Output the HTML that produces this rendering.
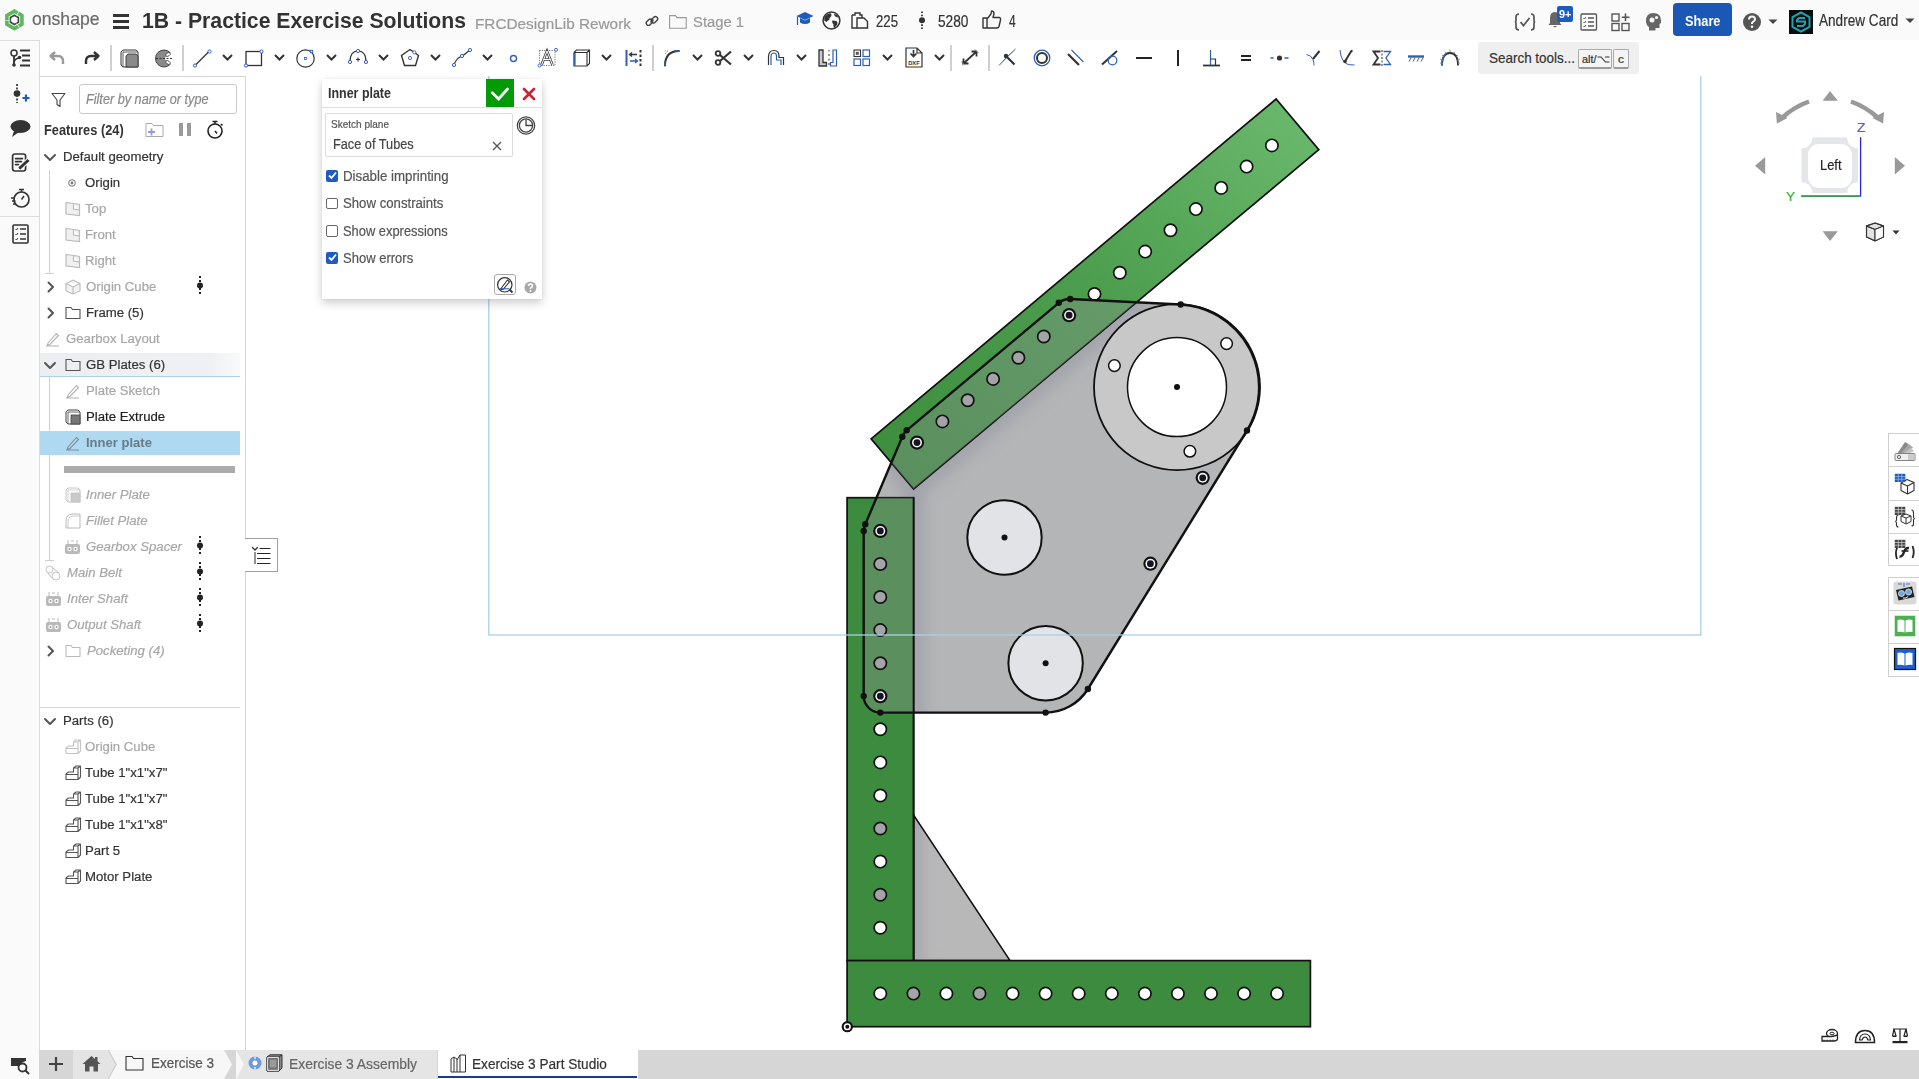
<!DOCTYPE html>
<html><head><meta charset="utf-8">
<style>
*{box-sizing:border-box;margin:0;padding:0}
html,body{width:1919px;height:1079px;overflow:hidden;background:#fff;font-family:"Liberation Sans",sans-serif;color:#333}
.abs{position:absolute}
#topbar{position:absolute;left:0;top:0;width:1919px;height:40px;background:#fafafa}
#strip{position:absolute;left:0;top:40px;width:40px;height:1039px;background:#fafafa;border-right:1px solid #dcdcdc;border-top:1px solid #dcdcdc}
#toolbar{position:absolute;left:40px;top:40px;width:1879px;height:36px;background:#fff}
#fpanel{position:absolute;left:39px;top:76px;width:207px;height:974px;background:#fff;border-top:1px solid #d6d6d6;border-right:1px solid #d6d6d6;border-left:1px solid #dcdcdc}
svg{overflow:visible}
.tx{-webkit-text-stroke:0.2px currentColor}
</style></head><body>
<svg width="1919" height="1079" viewBox="0 0 1919 1079" style="position:absolute;left:0;top:0">
<defs>
<linearGradient id="gg" x1="0" y1="0" x2="1" y2="0"><stop offset="0" stop-color="#a9aaae"/><stop offset="0.5" stop-color="#b3b4b6"/><stop offset="1" stop-color="#b9babb"/></linearGradient>
<linearGradient id="gt" x1="0" y1="1" x2="1" y2="0"><stop offset="0" stop-color="#3b8c3d"/><stop offset="0.5" stop-color="#4c9d4e"/><stop offset="1" stop-color="#6cba6e"/></linearGradient>
<filter id="blur" x="-20%" y="-20%" width="140%" height="140%"><feGaussianBlur stdDeviation="7"/></filter><clipPath id="gc"><path d="M913.6,815 L913.6,960.6 L1010,960.6 Z"/></clipPath><clipPath id="pc"><path d="M863.7,531 L863.7,696.1 A16.6,16.6 0 0 0 880.3,712.6 L1045.6,712.6 A50,50 0 0 0 1087.9,689 L1247,430.5 A83,83 0 0 0 1180.7,304.5 L1070.2,299 A16.6,16.6 0 0 0 1058.8,302.8 L906.7,430.3 A16.2,16.2 0 0 0 902.3,436.7 L865.3,524.3 A16.4,16.4 0 0 0 863.7,531 Z"/></clipPath>
</defs>
<path d="M913.6,815 L913.6,960.6 L1010,960.6 Z" fill="#b8b8b9"/>
<g clip-path="url(#gc)" filter="url(#blur)"><path d="M913.6,800 L913.6,975 L1020,975" fill="none" stroke="#9597a3" stroke-width="18" opacity="0.5"/></g>
<path d="M913.6,815 L913.6,960.6 L1010,960.6 Z" fill="none" stroke="#111" stroke-width="1.5"/>
<path d="M863.7,531 L863.7,696.1 A16.6,16.6 0 0 0 880.3,712.6 L1045.6,712.6 A50,50 0 0 0 1087.9,689 L1247,430.5 A83,83 0 0 0 1180.7,304.5 L1070.2,299 A16.6,16.6 0 0 0 1058.8,302.8 L906.7,430.3 A16.2,16.2 0 0 0 902.3,436.7 L865.3,524.3 A16.4,16.4 0 0 0 863.7,531 Z" fill="#b4b5b7"/>
<g clip-path="url(#pc)" filter="url(#blur)"><path d="M913.6,497 L913.6,720" stroke="#9597a3" stroke-width="22" opacity="0.55"/><path d="M871.1,438.9 L913.6,489 L1318.8,149.7" fill="none" stroke="#9597a3" stroke-width="22" opacity="0.55"/></g>
<circle cx="1177" cy="387.1" r="83" fill="#c8c8c9"/>
<rect x="847.1" y="497.7" width="66.5" height="463" fill="#3d8b3e" stroke="#111" stroke-width="1.7"/>
<rect x="847.1" y="960.6" width="463.3" height="66.1" fill="#3d8b3e" stroke="#111" stroke-width="1.7"/>
<path d="M871.1,438.9 L1276.1,99 L1318.8,149.7 L913.6,489 Z" fill="url(#gt)" stroke="#111" stroke-width="1.7"/>
<g clip-path="url(#pc)"><rect x="847.1" y="497.7" width="66.5" height="463" fill="#8f9696" opacity="0.36"/><path d="M871.1,438.9 L1276.1,99 L1318.8,149.7 L913.6,489 Z" fill="#8f9696" opacity="0.36"/></g>
<line x1="913.6" y1="497.7" x2="913.6" y2="960.6" stroke="#111" stroke-width="1.7"/>
<circle cx="880.3" cy="993.6" r="6.15" fill="#fff" stroke="#111" stroke-width="1.7"/>
<circle cx="913.4" cy="993.6" r="6.15" fill="#a3a3a8" stroke="#111" stroke-width="1.7"/>
<circle cx="946.4" cy="993.6" r="6.15" fill="#fff" stroke="#111" stroke-width="1.7"/>
<circle cx="979.5" cy="993.6" r="6.15" fill="#a3a3a8" stroke="#111" stroke-width="1.7"/>
<circle cx="1012.6" cy="993.6" r="6.15" fill="#fff" stroke="#111" stroke-width="1.7"/>
<circle cx="1045.6" cy="993.6" r="6.15" fill="#fff" stroke="#111" stroke-width="1.7"/>
<circle cx="1078.7" cy="993.6" r="6.15" fill="#fff" stroke="#111" stroke-width="1.7"/>
<circle cx="1111.8" cy="993.6" r="6.15" fill="#fff" stroke="#111" stroke-width="1.7"/>
<circle cx="1144.9" cy="993.6" r="6.15" fill="#fff" stroke="#111" stroke-width="1.7"/>
<circle cx="1177.9" cy="993.6" r="6.15" fill="#fff" stroke="#111" stroke-width="1.7"/>
<circle cx="1211.0" cy="993.6" r="6.15" fill="#fff" stroke="#111" stroke-width="1.7"/>
<circle cx="1244.1" cy="993.6" r="6.15" fill="#fff" stroke="#111" stroke-width="1.7"/>
<circle cx="1277.1" cy="993.6" r="6.15" fill="#fff" stroke="#111" stroke-width="1.7"/>
<circle cx="880.3" cy="530.9" r="7.1" fill="#111"/><circle cx="880.3" cy="530.9" r="4.95" fill="#f4f4f8"/><circle cx="880.3" cy="530.9" r="3.4" fill="#15141f"/>
<circle cx="880.3" cy="564.0" r="6.15" fill="#a3a3a8" stroke="#111" stroke-width="1.7"/>
<circle cx="880.3" cy="597.0" r="6.15" fill="#a3a3a8" stroke="#111" stroke-width="1.7"/>
<circle cx="880.3" cy="630.1" r="6.15" fill="#a3a3a8" stroke="#111" stroke-width="1.7"/>
<circle cx="880.3" cy="663.2" r="6.15" fill="#a3a3a8" stroke="#111" stroke-width="1.7"/>
<circle cx="880.3" cy="696.2" r="7.1" fill="#111"/><circle cx="880.3" cy="696.2" r="4.95" fill="#f4f4f8"/><circle cx="880.3" cy="696.2" r="3.4" fill="#15141f"/>
<circle cx="880.3" cy="729.3" r="6.15" fill="#fff" stroke="#111" stroke-width="1.7"/>
<circle cx="880.3" cy="762.4" r="6.15" fill="#fff" stroke="#111" stroke-width="1.7"/>
<circle cx="880.3" cy="795.5" r="6.15" fill="#fff" stroke="#111" stroke-width="1.7"/>
<circle cx="880.3" cy="828.5" r="6.15" fill="#a3a3a8" stroke="#111" stroke-width="1.7"/>
<circle cx="880.3" cy="861.6" r="6.15" fill="#fff" stroke="#111" stroke-width="1.7"/>
<circle cx="880.3" cy="894.7" r="6.15" fill="#a3a3a8" stroke="#111" stroke-width="1.7"/>
<circle cx="880.3" cy="927.7" r="6.15" fill="#fff" stroke="#111" stroke-width="1.7"/>
<circle cx="1271.9" cy="145.4" r="6.15" fill="#fff" stroke="#111" stroke-width="1.7"/>
<circle cx="1246.6" cy="166.6" r="6.15" fill="#fff" stroke="#111" stroke-width="1.7"/>
<circle cx="1221.2" cy="187.9" r="6.15" fill="#fff" stroke="#111" stroke-width="1.7"/>
<circle cx="1195.9" cy="209.1" r="6.15" fill="#fff" stroke="#111" stroke-width="1.7"/>
<circle cx="1170.5" cy="230.3" r="6.15" fill="#fff" stroke="#111" stroke-width="1.7"/>
<circle cx="1145.2" cy="251.6" r="6.15" fill="#fff" stroke="#111" stroke-width="1.7"/>
<circle cx="1119.8" cy="272.8" r="6.15" fill="#fff" stroke="#111" stroke-width="1.7"/>
<circle cx="1094.5" cy="294.0" r="6.15" fill="#fff" stroke="#111" stroke-width="1.7"/>
<circle cx="1069.1" cy="315.2" r="7.1" fill="#111"/><circle cx="1069.1" cy="315.2" r="4.95" fill="#f4f4f8"/><circle cx="1069.1" cy="315.2" r="3.4" fill="#15141f"/>
<circle cx="1043.8" cy="336.5" r="6.15" fill="#a3a3a8" stroke="#111" stroke-width="1.7"/>
<circle cx="1018.4" cy="357.7" r="6.15" fill="#a3a3a8" stroke="#111" stroke-width="1.7"/>
<circle cx="993.1" cy="378.9" r="6.15" fill="#a3a3a8" stroke="#111" stroke-width="1.7"/>
<circle cx="967.7" cy="400.2" r="6.15" fill="#a3a3a8" stroke="#111" stroke-width="1.7"/>
<circle cx="942.4" cy="421.4" r="6.15" fill="#a3a3a8" stroke="#111" stroke-width="1.7"/>
<circle cx="917.0" cy="442.6" r="7.1" fill="#111"/><circle cx="917.0" cy="442.6" r="4.95" fill="#f4f4f8"/><circle cx="917.0" cy="442.6" r="3.4" fill="#15141f"/>
<circle cx="1177" cy="387.1" r="49.5" fill="#fff" stroke="#111" stroke-width="1.5"/>
<circle cx="1177" cy="387.1" r="83" fill="none" stroke="#111" stroke-width="1.8"/>
<circle cx="1226.6" cy="343.6" r="5.8" fill="#fff" stroke="#111" stroke-width="1.5"/>
<circle cx="1114.4" cy="365.6" r="5.8" fill="#fff" stroke="#111" stroke-width="1.5"/>
<circle cx="1189.9" cy="451.3" r="5.8" fill="#fff" stroke="#111" stroke-width="1.5"/>
<circle cx="1004.5" cy="537.5" r="37.2" fill="#e1e3e6" stroke="#111" stroke-width="2"/>
<circle cx="1004.5" cy="537.5" r="3" fill="#111"/>
<circle cx="1045.6" cy="663.2" r="37.2" fill="#e1e3e6" stroke="#111" stroke-width="2"/>
<circle cx="1045.6" cy="663.2" r="3" fill="#111"/>
<circle cx="1177" cy="387.1" r="3" fill="#111"/>
<path d="M863.7,531 L863.7,696.1 A16.6,16.6 0 0 0 880.3,712.6 L1045.6,712.6 A50,50 0 0 0 1087.9,689 L1247,430.5 A83,83 0 0 0 1180.7,304.5 L1070.2,299 A16.6,16.6 0 0 0 1058.8,302.8 L906.7,430.3 A16.2,16.2 0 0 0 902.3,436.7 L865.3,524.3 A16.4,16.4 0 0 0 863.7,531 Z" fill="none" stroke="#111" stroke-width="2.4" stroke-linejoin="round"/>
<circle cx="863.7" cy="531" r="3.2" fill="#111"/>
<circle cx="865.3" cy="524.3" r="3.2" fill="#111"/>
<circle cx="863.7" cy="696.1" r="3.2" fill="#111"/>
<circle cx="880.3" cy="712.6" r="3.2" fill="#111"/>
<circle cx="1045.6" cy="712.6" r="3.2" fill="#111"/>
<circle cx="1087.9" cy="689" r="3.2" fill="#111"/>
<circle cx="1247" cy="430.5" r="3.2" fill="#111"/>
<circle cx="1180.7" cy="304.5" r="3.2" fill="#111"/>
<circle cx="1070.2" cy="299" r="3.2" fill="#111"/>
<circle cx="1058.8" cy="302.8" r="3.2" fill="#111"/>
<circle cx="906.7" cy="430.3" r="3.2" fill="#111"/>
<circle cx="902.3" cy="436.7" r="3.2" fill="#111"/>
<circle cx="1202.7" cy="477.8" r="7.1" fill="#111"/><circle cx="1202.7" cy="477.8" r="4.95" fill="#f4f4f8"/><circle cx="1202.7" cy="477.8" r="3.4" fill="#15141f"/>
<circle cx="1150.4" cy="563.7" r="7.1" fill="#111"/><circle cx="1150.4" cy="563.7" r="4.95" fill="#f4f4f8"/><circle cx="1150.4" cy="563.7" r="3.4" fill="#15141f"/>
<rect x="488.8" y="60" width="1212" height="575" fill="none" stroke="#a9cfe6" stroke-width="1.3"/>
<circle cx="847.3" cy="1026.7" r="4.6" fill="#fff" stroke="#111" stroke-width="2.1"/><circle cx="847.3" cy="1026.7" r="2" fill="#111"/>
</svg>
<div id="topbar"></div>
<div id="toolbar"></div>
<div id="strip"></div>
<div id="fpanel"></div>
<svg class="abs" style="left:2px;top:6px" width="26" height="28" viewBox="0 0 26 28"><path d="M4.87,13.90 L4.87,9.55 L12.40,5.20 L15.56,7.03" fill="none" stroke="#5cb85c" stroke-width="3.6" stroke-linejoin="miter"/><path d="M16.17,7.38 L19.93,9.55 L19.93,18.25 L16.77,20.08" fill="none" stroke="#5cb85c" stroke-width="3.6" stroke-linejoin="miter"/><path d="M16.17,20.43 L12.40,22.60 L4.87,18.25 L4.87,14.60" fill="none" stroke="#5cb85c" stroke-width="3.6" stroke-linejoin="miter"/><path d="M8.42,13.35 L8.42,11.60 L12.40,9.30 L13.60,9.99" fill="none" stroke="#444" stroke-width="1.7" stroke-linecap="round"/><path d="M14.87,10.73 L16.38,11.60 L16.38,16.20 L15.19,16.89" fill="none" stroke="#444" stroke-width="1.7" stroke-linecap="round"/><path d="M13.91,17.63 L12.40,18.50 L8.42,16.20 L8.42,14.82" fill="none" stroke="#444" stroke-width="1.7" stroke-linecap="round"/></svg>
<div class="abs tx" style="left:31.50px;top:9.64px;font-size:18.50px;line-height:18.50px;font-weight:normal;font-style:normal;color:#6a6a6a;white-space:pre;transform:scaleX(0.9509);transform-origin:0 0;">onshape</div>
<div class="abs" style="left:113px;top:14px;width:16px;height:2.6px;background:#333"></div><div class="abs" style="left:113px;top:20px;width:16px;height:2.6px;background:#333"></div><div class="abs" style="left:113px;top:26px;width:16px;height:2.6px;background:#333"></div>
<div class="abs" style="left:141.70px;top:9.41px;font-size:22.67px;line-height:22.67px;font-weight:bold;font-style:normal;color:#333;white-space:pre;transform:scaleX(0.9358);transform-origin:0 0;">1B - Practice Exercise Solutions</div>
<div class="abs tx" style="left:475.30px;top:15.80px;font-size:15.12px;line-height:15.12px;font-weight:normal;font-style:normal;color:#999;white-space:pre;transform:scaleX(1.0147);transform-origin:0 0;">FRCDesignLib Rework</div>
<svg class="abs" style="left:645px;top:14px" width="14" height="14" viewBox="0 0 14 14"><path d="M5.5,8.5 L8.5,5.5" stroke="#444" stroke-width="1.5"/><rect x="0.9" y="6" width="7" height="4.5" rx="2.2" transform="rotate(-45 4.4 8.25)" fill="none" stroke="#444" stroke-width="1.4"/><rect x="6" y="3.5" width="7" height="4.5" rx="2.2" transform="rotate(-45 9.5 5.75)" fill="none" stroke="#444" stroke-width="1.4"/></svg>
<svg class="abs" style="left:669px;top:15px" width="18" height="14" viewBox="0 0 18 14"><path d="M0.6,0.6 L6.5,0.6 L8,2.6 L17.2,2.6 L17.2,13.2 L0.6,13.2 Z" fill="none" stroke="#999" stroke-width="1.1"/></svg>
<div class="abs tx" style="left:692.90px;top:13.88px;font-size:15.26px;line-height:15.26px;font-weight:normal;font-style:normal;color:#999;white-space:pre;transform:scaleX(0.9713);transform-origin:0 0;">Stage 1</div>
<svg class="abs" style="left:796px;top:11px" width="18" height="16" viewBox="0 0 18 16"><path d="M9,1 L17.5,5 L9,9 L0.5,5 Z" fill="#1d5bbf"/><path d="M4,7 L4,11.5 Q9,14.5 14,11.5 L14,7 L9,9.5 Z" fill="#1d5bbf"/><path d="M1.5,5.5 L1.5,14" stroke="#1d5bbf" stroke-width="1.2"/></svg>
<svg class="abs" style="left:822px;top:11px" width="19" height="19" viewBox="0 0 19 19"><circle cx="9.5" cy="9.5" r="8.4" fill="none" stroke="#333" stroke-width="1.5"/><path d="M2.5,6 Q5,2.5 9,2.2 L9.5,4.5 Q8.5,6.5 7.5,7 Q8,9 6,9.5 L4.5,11 L2.2,9.5 Z M10,9.5 L14.5,10 Q16.2,11.5 15,14 L12,17.2 Q11.2,15 11.5,13.5 Q10,12 10,9.5 Z M12,2.5 Q15.5,3.5 16.5,6.5 L14,6 L12.5,4.5 Z" fill="#333"/></svg>
<svg class="abs" style="left:851px;top:12px" width="18" height="17" viewBox="0 0 18 17"><path d="M1,3 L4,3 L4,1 L9,1 L9,3 L11,3 L11,6" fill="none" stroke="#333" stroke-width="1.4"/><path d="M1,3 L1,16 L6,16" fill="none" stroke="#333" stroke-width="1.4"/><path d="M6,6 L13,6 L16.5,9.5 L16.5,16 L6,16 Z" fill="none" stroke="#333" stroke-width="1.4"/></svg>
<div class="abs tx" style="left:875.70px;top:12.82px;font-size:16.28px;line-height:16.28px;font-weight:normal;font-style:normal;color:#333;white-space:pre;transform:scaleX(0.8099);transform-origin:0 0;">225</div>
<svg class="abs" style="left:918px;top:11px" width="8" height="18" viewBox="0 0 8 18"><path d="M4,0.5 L4,18" stroke="#333" stroke-width="1.8" stroke-dasharray="1.6,1.6"/><circle cx="4" cy="9.3" r="3" fill="#333"/></svg>
<div class="abs tx" style="left:937.60px;top:12.82px;font-size:16.28px;line-height:16.28px;font-weight:normal;font-style:normal;color:#333;white-space:pre;transform:scaleX(0.8422);transform-origin:0 0;">5280</div>
<svg class="abs" style="left:982px;top:10px" width="20" height="19" viewBox="0 0 20 19"><path d="M1,8 L5,8 L5,18 L1,18 Z M5,9 L9,4 L9.5,1 Q12,1 12,4 L11,7.5 L17.5,7.5 Q19,8 18.5,10 L17,16.5 Q16.5,18 15,18 L5,18" fill="none" stroke="#333" stroke-width="1.4" stroke-linejoin="round"/></svg>
<div class="abs tx" style="left:1009.00px;top:12.82px;font-size:16.28px;line-height:16.28px;font-weight:normal;font-style:normal;color:#333;white-space:pre;transform:scaleX(0.7399);transform-origin:0 0;">4</div>
<svg class="abs" style="left:1514px;top:13px" width="22" height="18" viewBox="0 0 22 18"><path d="M5,1 Q2,1 2,4 L2,7 Q2,9 0.8,9 Q2,9 2,11 L2,14 Q2,17 5,17 M17,1 Q20,1 20,4 L20,7 Q20,9 21.2,9 Q20,9 20,11 L20,14 Q20,17 17,17" fill="none" stroke="#555" stroke-width="1.7"/><path d="M6.5,9 L9.5,12.5 L15.5,5" fill="none" stroke="#555" stroke-width="1.8"/></svg>
<svg class="abs" style="left:1548px;top:10px" width="14" height="18" viewBox="0 0 14 18"><path d="M2,13 L2,8 Q2,2 7,2 Q12,2 12,8 L12,13 L13.5,15 L0.5,15 Z M5,16 Q7,18.5 9,16" fill="#666"/></svg>
<div class="abs" style="left:1557px;top:6px;width:16px;height:15.5px;background:#1d5bbf;border-radius:2px"></div>
<div class="abs" style="left:1558.50px;top:8.77px;font-size:10.90px;line-height:10.90px;font-weight:bold;font-style:normal;color:#fff;white-space:pre;transform:scaleX(1.0057);transform-origin:0 0;">9+</div>
<svg class="abs" style="left:1580px;top:13px" width="18" height="18" viewBox="0 0 18 18"><rect x="1" y="1" width="15.5" height="16" rx="1" fill="none" stroke="#555" stroke-width="1.3"/><path d="M3.5,5 L4.5,6 L6,4 M3.5,9 L4.5,10 L6,8 M3.5,13 L4.5,14 L6,12" fill="none" stroke="#555" stroke-width="1"/><path d="M8,5 L14,5 M8,9 L14,9 M8,13 L14,13" stroke="#555" stroke-width="1.3"/></svg>
<svg class="abs" style="left:1611px;top:13px" width="20" height="18" viewBox="0 0 20 18"><rect x="1" y="1" width="7" height="7" fill="none" stroke="#555" stroke-width="1.4"/><rect x="1" y="10.5" width="7" height="7" fill="none" stroke="#555" stroke-width="1.4"/><rect x="11" y="10.5" width="7" height="7" fill="none" stroke="#555" stroke-width="1.4"/><path d="M14.5,0.5 L14.5,8 M10.8,4.3 L18.5,4.3" stroke="#555" stroke-width="1.6"/></svg>
<svg class="abs" style="left:1644px;top:12px" width="18" height="19" viewBox="0 0 18 19"><path d="M2,9 Q2,1 9.5,1 Q17,1 17,8.5 L17,11 L15.5,12 L15.5,16 L11.5,16 L11.5,18.5 L5,18.5 L5,15 Q2,13 2,9 Z" fill="#666"/><circle cx="8" cy="8" r="2.5" fill="#f6f6f6"/><circle cx="12.5" cy="5.5" r="1.6" fill="#f6f6f6"/></svg>
<div class="abs" style="left:1673px;top:3px;width:59px;height:33px;background:#1b57b5;border-radius:4px"></div>
<div class="abs" style="left:1685.00px;top:12.58px;font-size:15.26px;line-height:15.26px;font-weight:bold;font-style:normal;color:#fff;white-space:pre;transform:scaleX(0.8369);transform-origin:0 0;">Share</div>
<svg class="abs" style="left:1742px;top:12px" width="20" height="20" viewBox="0 0 20 20"><circle cx="10" cy="10" r="9" fill="#555"/><path d="M7,7.5 Q7,4.5 10,4.5 Q13,4.5 13,7.3 Q13,9 10.8,10 L10,11 L10,12" fill="none" stroke="#f6f6f6" stroke-width="2"/><circle cx="10" cy="14.8" r="1.3" fill="#f6f6f6"/></svg>
<svg class="abs" style="left:1768px;top:19px" width="10" height="6" viewBox="0 0 10 6"><path d="M0.5,0.5 L9.5,0.5 L5,5 Z" fill="#444"/></svg>
<svg class="abs" style="left:1789px;top:10px" width="24" height="24" viewBox="0 0 24 24"><rect width="24" height="24" fill="#0b0b0b"/><path d="M12,2.5 L20.5,7.2 L20.5,16.8 L12,21.5 L3.5,16.8 L3.5,7.2 Z" fill="none" stroke="#1aa3b0" stroke-width="2"/><path d="M16,8 L10,8 L8,10 L8,11.5 L16,11.5 L16,14 L14,16 L8,16" fill="none" stroke="#1aa3b0" stroke-width="2"/></svg>
<div class="abs tx" style="left:1819.20px;top:12.67px;font-size:15.99px;line-height:15.99px;font-weight:normal;font-style:normal;color:#333;white-space:pre;transform:scaleX(0.8499);transform-origin:0 0;">Andrew Card</div>
<svg class="abs" style="left:1905px;top:18px" width="10" height="6" viewBox="0 0 10 6"><path d="M0.5,0.5 L9.5,0.5 L5,5 Z" fill="#444"/></svg>
<svg class="abs" style="left:49px;top:49px" width="16" height="16" viewBox="0 0 16 16"><path d="M6,3 L1.5,7 L6,11 M2,7 L9,7 Q14,7 14,12 L14,15" fill="none" stroke="#9a9a9a" stroke-width="2.4" stroke-linejoin="round"/></svg>
<svg class="abs" style="left:84px;top:49px" width="16" height="16" viewBox="0 0 16 16"><path d="M10,3 L14.5,7 L10,11 M14,7 L7,7 Q2,7 2,12 L2,15" fill="none" stroke="#333" stroke-width="2.4" stroke-linejoin="round"/></svg>
<div class="abs" style="left:110.25px;top:45px;width:1.5px;height:26px;background:#cfcfcf"></div>
<svg class="abs" style="left:120px;top:49px" width="19" height="19" viewBox="0 0 19 19"><path d="M1,3 L3,1 L16,1 L18,3 L18,18 L3,18 L1,16 Z" fill="#fff" stroke="#333" stroke-width="1"/><path d="M3,18 L3,3 L18,3" fill="none" stroke="#333" stroke-width="0.8"/><path d="M6,7 L8,5 L16,5 L18,7 L18,18 L6,18 Z" fill="#8a8a8a" stroke="#333" stroke-width="0.9"/></svg>
<svg class="abs" style="left:155px;top:49px" width="19" height="19" viewBox="0 0 19 19"><circle cx="9" cy="9.5" r="8.5" fill="#8a8a8a" stroke="#444" stroke-width="1"/><path d="M9,9.5 L18,2 L18,17 Z" fill="#fff"/><ellipse cx="13" cy="5.5" rx="2.5" ry="1.6" fill="#fff" stroke="#444" stroke-width="0.8" transform="rotate(-35 13 5.5)"/><ellipse cx="13" cy="13.5" rx="2.5" ry="1.6" fill="#fff" stroke="#444" stroke-width="0.8" transform="rotate(35 13 13.5)"/><path d="M1,9.5 L17,9.5" stroke="#222" stroke-width="0.9" stroke-dasharray="2,1.5"/></svg>
<div class="abs" style="left:182.25px;top:45px;width:1.5px;height:26px;background:#cfcfcf"></div>
<svg class="abs" style="left:193px;top:49px" width="19" height="19" viewBox="0 0 19 19"><path d="M2,16.5 L16.5,2" stroke="#333" stroke-width="1.3"/><circle cx="2" cy="16.5" r="1.6" fill="#fff" stroke="#2f5fb3" stroke-width="1"/><circle cx="16.5" cy="2.5" r="1.6" fill="#fff" stroke="#2f5fb3" stroke-width="1"/></svg>
<svg class="abs" style="left:221.5px;top:54px" width="11" height="7" viewBox="0 0 11 7"><path d="M1,1 L5.5,5.5 L10,1" fill="none" stroke="#333" stroke-width="2"/></svg>
<svg class="abs" style="left:244px;top:49px" width="20" height="19" viewBox="0 0 20 19"><rect x="2" y="2.5" width="15.5" height="14" fill="none" stroke="#333" stroke-width="1.3"/><circle cx="2" cy="16.5" r="1.6" fill="#fff" stroke="#2f5fb3" stroke-width="1"/><circle cx="17.5" cy="2.5" r="1.6" fill="#fff" stroke="#2f5fb3" stroke-width="1"/></svg>
<svg class="abs" style="left:273.5px;top:54px" width="11" height="7" viewBox="0 0 11 7"><path d="M1,1 L5.5,5.5 L10,1" fill="none" stroke="#333" stroke-width="2"/></svg>
<svg class="abs" style="left:296px;top:48px" width="20" height="20" viewBox="0 0 20 20"><circle cx="9.5" cy="10.5" r="8.7" fill="none" stroke="#333" stroke-width="1.2"/><rect x="8.5" y="9.5" width="2" height="2" fill="none" stroke="#2f5fb3" stroke-width="0.8"/><rect x="14.3" y="2.3" width="2.4" height="2.4" fill="#fff" stroke="#2f5fb3" stroke-width="0.9"/></svg>
<svg class="abs" style="left:325.5px;top:54px" width="11" height="7" viewBox="0 0 11 7"><path d="M1,1 L5.5,5.5 L10,1" fill="none" stroke="#333" stroke-width="2"/></svg>
<svg class="abs" style="left:348px;top:49px" width="20" height="16" viewBox="0 0 20 16"><path d="M2,13 Q2,2 10,2 Q18,2 18,13" fill="none" stroke="#333" stroke-width="1.2"/><circle cx="2" cy="13" r="1.6" fill="#fff" stroke="#2f5fb3" stroke-width="1"/><circle cx="18" cy="13" r="1.6" fill="#fff" stroke="#2f5fb3" stroke-width="1"/><circle cx="10" cy="2" r="1.6" fill="#fff" stroke="#2f5fb3" stroke-width="1"/><path d="M8,10.5 L12,10.5 M10,8.5 L10,12.5" stroke="#333" stroke-width="1.2"/></svg>
<svg class="abs" style="left:377.5px;top:54px" width="11" height="7" viewBox="0 0 11 7"><path d="M1,1 L5.5,5.5 L10,1" fill="none" stroke="#333" stroke-width="2"/></svg>
<svg class="abs" style="left:400px;top:48px" width="20" height="19" viewBox="0 0 20 19"><path d="M10,1.5 L18.5,7.5 L15.5,17.5 L4.5,17.5 L1.5,7.5 Z" fill="none" stroke="#333" stroke-width="1.4"/><circle cx="10" cy="10" r="1.6" fill="none" stroke="#2f5fb3" stroke-width="0.9"/><circle cx="14.3" cy="4.3" r="1.6" fill="#fff" stroke="#2f5fb3" stroke-width="0.9"/></svg>
<svg class="abs" style="left:429.5px;top:54px" width="11" height="7" viewBox="0 0 11 7"><path d="M1,1 L5.5,5.5 L10,1" fill="none" stroke="#333" stroke-width="2"/></svg>
<svg class="abs" style="left:452px;top:48px" width="20" height="20" viewBox="0 0 20 20"><path d="M2,17 Q4,11 8,9 Q11,8 13,6 L18,2" fill="none" stroke="#333" stroke-width="1.2"/><circle cx="2" cy="17" r="1.6" fill="#fff" stroke="#2f5fb3" stroke-width="1"/><circle cx="10" cy="8" r="1.6" fill="#fff" stroke="#2f5fb3" stroke-width="1"/><circle cx="18" cy="2" r="1.6" fill="#fff" stroke="#2f5fb3" stroke-width="1"/></svg>
<svg class="abs" style="left:481.5px;top:54px" width="11" height="7" viewBox="0 0 11 7"><path d="M1,1 L5.5,5.5 L10,1" fill="none" stroke="#333" stroke-width="2"/></svg>
<svg class="abs" style="left:509px;top:54px" width="9" height="9" viewBox="0 0 9 9"><circle cx="4.5" cy="4.5" r="3" fill="none" stroke="#2f5fb3" stroke-width="1.4"/></svg>
<svg class="abs" style="left:537px;top:48px" width="22" height="20" viewBox="0 0 22 20"><rect x="2.5" y="2.5" width="15.5" height="15" fill="none" stroke="#555" stroke-width="0.8" stroke-dasharray="1.2,1.2"/><path d="M4.5,17 L10,3 L15.5,17 M7,11.5 L13,11.5" fill="none" stroke="#444" stroke-width="2.6"/><path d="M4.5,17 L10,3 L15.5,17 M7,11.5 L13,11.5" fill="none" stroke="#fff" stroke-width="1"/><circle cx="2.5" cy="17.5" r="1.5" fill="#fff" stroke="#2f5fb3" stroke-width="0.9"/><circle cx="19" cy="1.8" r="1.5" fill="#fff" stroke="#2f5fb3" stroke-width="0.9"/></svg>
<svg class="abs" style="left:573px;top:49px" width="18" height="18" viewBox="0 0 18 18"><path d="M1,3.5 L3.5,1 L16.5,1 L16.5,14.5 L14,17 L1,17 Z M1,3.5 L14,3.5 L14,17 M14,3.5 L16.5,1" fill="none" stroke="#333" stroke-width="1.1"/><path d="M1.7,4 L1.7,16.5" stroke="#2f5fb3" stroke-width="1.8"/></svg>
<svg class="abs" style="left:601px;top:54px" width="11" height="7" viewBox="0 0 11 7"><path d="M1,1 L5.5,5.5 L10,1" fill="none" stroke="#333" stroke-width="2"/></svg>
<svg class="abs" style="left:625px;top:49px" width="18" height="18" viewBox="0 0 18 18"><path d="M1.5,1 L1.5,17" stroke="#2f5fb3" stroke-width="2"/><path d="M15.5,1 L15.5,17" stroke="#333" stroke-width="2" stroke-dasharray="2.5,2"/><path d="M12,5.5 L5,5.5 M7,3.5 L4.5,5.5 L7,7.5" fill="none" stroke="#333" stroke-width="1.3"/><path d="M5,12 L12,12 M10,10 L12.5,12 L10,14" fill="none" stroke="#2f5fb3" stroke-width="1.3"/></svg>
<div class="abs" style="left:652.25px;top:45px;width:1.5px;height:26px;background:#cfcfcf"></div>
<svg class="abs" style="left:663px;top:49px" width="18" height="18" viewBox="0 0 18 18"><path d="M2,17 Q2,2 16,2" fill="none" stroke="#333" stroke-width="2"/><path d="M2,12 L2,17.5 M11,2 L17,2" stroke="#2f5fb3" stroke-width="1.5"/><path d="M2,2 L5,2 L2,5" fill="none" stroke="#555" stroke-width="0.7" stroke-dasharray="1,1"/></svg>
<svg class="abs" style="left:691.5px;top:54px" width="11" height="7" viewBox="0 0 11 7"><path d="M1,1 L5.5,5.5 L10,1" fill="none" stroke="#333" stroke-width="2"/></svg>
<svg class="abs" style="left:715px;top:50px" width="17" height="16" viewBox="0 0 17 16"><circle cx="3" cy="3.5" r="2.3" fill="none" stroke="#333" stroke-width="1.8"/><circle cx="3" cy="12.5" r="2.3" fill="none" stroke="#333" stroke-width="1.8"/><path d="M5,5 L16,14.5 M5,11 L16,1.5" stroke="#333" stroke-width="2.2"/></svg>
<svg class="abs" style="left:743px;top:54px" width="11" height="7" viewBox="0 0 11 7"><path d="M1,1 L5.5,5.5 L10,1" fill="none" stroke="#333" stroke-width="2"/></svg>
<svg class="abs" style="left:767px;top:49px" width="18" height="17" viewBox="0 0 18 17"><path d="M1.5,16 L1.5,8 Q1.5,1.5 7,1.5 Q12,1.5 12,7 L12,8.5 L16.5,8.5 L16.5,16" fill="none" stroke="#333" stroke-width="1.2"/><path d="M4,16 L4,8 Q4,4 7,4 Q9.5,4 9.5,7 L9.5,11 L14,11 L14,16" fill="none" stroke="#2f5fb3" stroke-width="1.2"/></svg>
<svg class="abs" style="left:795.5px;top:54px" width="11" height="7" viewBox="0 0 11 7"><path d="M1,1 L5.5,5.5 L10,1" fill="none" stroke="#333" stroke-width="2"/></svg>
<svg class="abs" style="left:818px;top:49px" width="20" height="18" viewBox="0 0 20 18"><path d="M1,1 L5,1 L5,13.5 L8.5,13.5 L8.5,17 L1,17 Z" fill="#ccc" stroke="#333" stroke-width="1.3"/><path d="M11,1 L11,2.5 M11,5 L11,7 M11,9.5 L11,11.5 M11,14 L11,16" stroke="#333" stroke-width="1"/><path d="M18.5,1 L18.5,17 L12.5,17 L12.5,13.5 L15,13.5 L15,1 Z" fill="none" stroke="#2f5fb3" stroke-width="1.2"/></svg>
<svg class="abs" style="left:853px;top:49px" width="18" height="18" viewBox="0 0 18 18"><rect x="1" y="1" width="6.5" height="6.5" fill="none" stroke="#333" stroke-width="1.1"/><rect x="2.8" y="2.8" width="3" height="3" fill="#555"/><rect x="10" y="1" width="6.5" height="6.5" fill="none" stroke="#2f5fb3" stroke-width="1.2"/><rect x="1" y="10" width="6.5" height="6.5" fill="none" stroke="#2f5fb3" stroke-width="1.2"/><rect x="10" y="10" width="6.5" height="6.5" fill="none" stroke="#2f5fb3" stroke-width="1.2"/></svg>
<svg class="abs" style="left:881.5px;top:54px" width="11" height="7" viewBox="0 0 11 7"><path d="M1,1 L5.5,5.5 L10,1" fill="none" stroke="#333" stroke-width="2"/></svg>
<svg class="abs" style="left:905px;top:47px" width="18" height="21" viewBox="0 0 18 21"><path d="M1,1 L12,1 L17,6 L17,20 L1,20 Z M12,1 L12,6 L17,6" fill="none" stroke="#333" stroke-width="1.2"/><path d="M8.5,3 L8.5,9 M5.5,6.5 L8.5,9.5 L11.5,6.5" fill="none" stroke="#333" stroke-width="1.6"/><text x="9" y="18" font-size="5.8" font-family="Liberation Sans" font-weight="bold" text-anchor="middle" fill="#333">DXF</text></svg>
<svg class="abs" style="left:933.5px;top:54px" width="11" height="7" viewBox="0 0 11 7"><path d="M1,1 L5.5,5.5 L10,1" fill="none" stroke="#333" stroke-width="2"/></svg>
<div class="abs" style="left:950.25px;top:45px;width:1.5px;height:26px;background:#cfcfcf"></div>
<svg class="abs" style="left:961px;top:49px" width="18" height="17" viewBox="0 0 18 17"><path d="M2.5,14.5 L15.5,2.5 M2.5,14.5 L2.5,9.5 M2.5,14.5 L7.5,14.5 M15.5,2.5 L10.5,2.5 M15.5,2.5 L15.5,7.5" fill="none" stroke="#333" stroke-width="1.8"/><path d="M2,16.5 L1,12 M14,0.5 L17.5,4" stroke="#555" stroke-width="0.8"/></svg>
<div class="abs" style="left:988.25px;top:45px;width:1.5px;height:26px;background:#cfcfcf"></div>
<svg class="abs" style="left:998px;top:48px" width="19" height="19" viewBox="0 0 19 19"><path d="M1,17.5 L9.5,8.5 L17.5,1" stroke="#2f5fb3" stroke-width="1"/><path d="M7.5,7.5 L16.5,16.5" stroke="#333" stroke-width="2.2"/><circle cx="8" cy="8" r="2.2" fill="#333"/></svg>
<svg class="abs" style="left:1033px;top:49px" width="18" height="18" viewBox="0 0 18 18"><circle cx="9" cy="9" r="7.8" fill="none" stroke="#2f5fb3" stroke-width="1.3"/><circle cx="9" cy="9" r="5" fill="none" stroke="#333" stroke-width="2"/></svg>
<svg class="abs" style="left:1067px;top:49px" width="18" height="18" viewBox="0 0 18 18"><path d="M1,5 L12,16" stroke="#333" stroke-width="2.2"/><path d="M4.5,1 L16.5,13" stroke="#2f5fb3" stroke-width="1.1"/></svg>
<svg class="abs" style="left:1101px;top:49px" width="18" height="18" viewBox="0 0 18 18"><path d="M1,15.5 L16,2" stroke="#333" stroke-width="2"/><circle cx="11.5" cy="11.5" r="4.3" fill="none" stroke="#2f5fb3" stroke-width="1.2"/></svg>
<div class="abs" style="left:1135.5px;top:57px;width:16px;height:2px;background:#222"></div>
<div class="abs" style="left:1176.5px;top:50px;width:2px;height:16px;background:#222"></div>
<svg class="abs" style="left:1202px;top:49px" width="19" height="18" viewBox="0 0 19 18"><path d="M1,16.5 L18,16.5" stroke="#333" stroke-width="1.8"/><path d="M8.5,1 L8.5,16" stroke="#2f5fb3" stroke-width="1.2"/><path d="M8.5,10 L13.5,10 L13.5,16" fill="none" stroke="#333" stroke-width="1.2"/></svg>
<div class="abs" style="left:1240.5px;top:54.5px;width:10px;height:2px;background:#222"></div><div class="abs" style="left:1240.5px;top:59px;width:10px;height:2px;background:#222"></div>
<svg class="abs" style="left:1270px;top:53px" width="19" height="10" viewBox="0 0 19 10"><path d="M0.5,5 L3.5,5 M14.5,5 L18.5,5" stroke="#2f5fb3" stroke-width="1.3"/><circle cx="9.5" cy="5" r="2.6" fill="#333"/></svg>
<svg class="abs" style="left:1305px;top:49px" width="17" height="18" viewBox="0 0 17 18"><path d="M1.5,5.5 Q6,6 8,10.5 Q9,13 9,16.5" fill="none" stroke="#2f5fb3" stroke-width="1"/><path d="M8,10 L14.5,2" stroke="#333" stroke-width="2"/></svg>
<svg class="abs" style="left:1339px;top:49px" width="18" height="18" viewBox="0 0 18 18"><path d="M1,1 Q2,12 8,15 Q10,16 15.5,16" fill="none" stroke="#2f5fb3" stroke-width="1"/><path d="M6,12.5 L11,4 Q12,2 13.5,1.5" fill="none" stroke="#333" stroke-width="2"/><circle cx="6" cy="12.5" r="1.8" fill="#333"/></svg>
<svg class="abs" style="left:1372px;top:50px" width="20" height="16" viewBox="0 0 20 16"><path d="M8.5,1.5 L1.5,1.5 L6,8 L1.5,14.5 L8.5,14.5" fill="none" stroke="#333" stroke-width="1.8"/><path d="M10,0 L10,16" stroke="#333" stroke-width="1" stroke-dasharray="2,1.5"/><path d="M11.5,1.5 L18.5,1.5 L14,8 L18.5,14.5 L11.5,14.5" fill="none" stroke="#2f5fb3" stroke-width="1.3"/></svg>
<svg class="abs" style="left:1407px;top:55px" width="18" height="7" viewBox="0 0 18 7"><path d="M1,1.5 L17,1.5" stroke="#2f5fb3" stroke-width="2.4"/><path d="M2,6.5 L4,3 M6,6.5 L8,3 M10,6.5 L12,3 M14,6.5 L16,3" stroke="#444" stroke-width="0.9"/></svg>
<svg class="abs" style="left:1439px;top:48px" width="22" height="19" viewBox="0 0 22 19"><path d="M3,17.5 Q3,5 11,5 Q19,5 19,17.5" fill="none" stroke="#333" stroke-width="1.8"/><path d="M3,17.5 Q3,9 7,6.5" fill="none" stroke="#2f5fb3" stroke-width="1.8"/><path d="M1,15 L3,15.5 M1,11 L3.5,12 M3,7 L5,8.5 M6,3.5 L7.5,5.5 M11,1.5 L11,4 M16,3.5 L14.5,5.5 M19,7 L17,8.5 M21,11 L18.5,12 M21,15 L19,15.5" stroke="#888" stroke-width="0.9"/></svg>
<div class="abs" style="left:1478px;top:42px;width:161px;height:32px;background:#efefef;border-radius:3px"></div>
<div class="abs tx" style="left:1488.50px;top:51.13px;font-size:14.97px;line-height:14.97px;font-weight:normal;font-style:normal;color:#333;white-space:pre;transform:scaleX(0.8987);transform-origin:0 0;">Search tools...</div>
<div class="abs" style="left:1578.25px;top:49.25px;width:33.5px;height:19.5px;border:1px solid #aaa;border-bottom:2px solid #999;border-radius:2px;background:#f4f4f4"></div>
<div class="abs tx" style="left:1581.75px;top:53.90px;font-size:10.76px;line-height:10.76px;font-weight:normal;font-style:normal;color:#333;white-space:pre;transform:scaleX(1.0105);transform-origin:0 0;">alt/</div>
<svg class="abs" style="left:1597px;top:56px" width="13" height="7" viewBox="0 0 13 7"><path d="M0.5,1 L4,1 L8.5,6 L12.5,6 M8,1 L12.5,1" fill="none" stroke="#333" stroke-width="1.1"/></svg>
<div class="abs" style="left:1612.5px;top:49.25px;width:16.75px;height:19.5px;border:1px solid #aaa;border-bottom:2px solid #999;border-radius:2px;background:#f4f4f4"></div>
<div class="abs tx" style="left:1617.80px;top:54.11px;font-size:10.50px;line-height:10.50px;font-weight:normal;font-style:normal;color:#333;white-space:pre;transform:scaleX(1.1429);transform-origin:0 0;">c</div>
<svg class="abs" style="left:10px;top:49px" width="21" height="19" viewBox="0 0 21 19"><circle cx="4" cy="4" r="3" fill="none" stroke="#333" stroke-width="1.5"/><path d="M4,7 L4,16" stroke="#333" stroke-width="1.8"/><path d="M4,14 Q4,10 9,9" fill="none" stroke="#333" stroke-width="1.6"/><circle cx="9.5" cy="8.5" r="1.8" fill="#333"/><circle cx="4" cy="16" r="1.8" fill="#333"/><path d="M10,1.5 L20,1.5 M12,6.5 L20,6.5 M12,11.5 L20,11.5 M10,16.5 L20,16.5" stroke="#333" stroke-width="2"/></svg>
<svg class="abs" style="left:12px;top:84px" width="18" height="20" viewBox="0 0 18 20"><path d="M5,0 L5,19" stroke="#333" stroke-width="1.7" stroke-dasharray="2,1.6"/><circle cx="5" cy="9.5" r="3.3" fill="#333"/><path d="M10.5,14 L17.5,14 M14,10.5 L14,17.5" stroke="#1d5bbf" stroke-width="2.2"/></svg>
<svg class="abs" style="left:10px;top:119px" width="21" height="19" viewBox="0 0 21 19"><ellipse cx="10.5" cy="7.5" rx="10" ry="6.5" fill="#333"/><path d="M4,12 L2,18 L9,13 Z" fill="#333"/></svg>
<svg class="abs" style="left:11px;top:152px" width="20" height="21" viewBox="0 0 20 21"><rect x="1.6" y="2" width="13" height="17" rx="2.2" fill="none" stroke="#333" stroke-width="1.7"/><path d="M4.5,6.6 L11.5,6.6 M4.5,9.6 L10.5,9.6 M4.5,12.6 L7.5,12.6" stroke="#333" stroke-width="1.6" stroke-linecap="round"/><path d="M8.3,16.5 L17.5,8" stroke="#fafafa" stroke-width="5"/><path d="M8.3,16.5 L17.5,8" stroke="#333" stroke-width="3"/><path d="M7.8,17.2 L9.5,14.5 L10.8,15.8 Z" fill="#333"/></svg>
<svg class="abs" style="left:10px;top:188px" width="21" height="21" viewBox="0 0 21 21"><circle cx="11.5" cy="11.5" r="7.5" fill="none" stroke="#333" stroke-width="1.7"/><path d="M9,1.5 L14,1.5 M11.5,1.5 L11.5,4 M11.5,11.5 L14,8 M1,10 L5,10 M2,13 L5.5,13 M3,16 L6,16" stroke="#333" stroke-width="1.5"/></svg>
<div class="abs" style="left:0;top:216px;width:39px;height:1px;background:#dcdcdc"></div>
<svg class="abs" style="left:12px;top:224px" width="17" height="20" viewBox="0 0 17 20"><rect x="1" y="1" width="15" height="18" rx="1" fill="none" stroke="#333" stroke-width="1.6"/><path d="M3.5,5 L4.5,6 L6,4 M3.5,10 L4.5,11 L6,9 M3.5,15 L4.5,16 L6,14" fill="none" stroke="#333" stroke-width="1"/><path d="M8,5 L14,5 M8,10 L14,10 M8,15 L14,15" stroke="#333" stroke-width="1.5"/></svg>
<svg class="abs" style="left:10px;top:1057px" width="21" height="18" viewBox="0 0 21 18"><path d="M1,1 L16,1 L16,4 Q11,5 9,9 L1,9 Z" fill="#333"/><circle cx="12.5" cy="10.5" r="4" fill="none" stroke="#333" stroke-width="1.8"/><path d="M15.5,13.5 L19,17" stroke="#333" stroke-width="2"/></svg>
<svg class="abs" style="left:51px;top:92px" width="15" height="16"><path d="M1,1.5 L14,1.5 L9,8 L9,14.5 L6,12.5 L6,8 Z" fill="none" stroke="#444" stroke-width="1.1" stroke-linejoin="round"/></svg>
<div class="abs" style="left:79px;top:84px;width:158px;height:30px;border:1px solid #c9c9c9;border-radius:3px;background:#fff"></div>
<div class="abs tx" style="left:86.20px;top:92.79px;font-size:13.95px;line-height:13.95px;font-weight:normal;font-style:italic;color:#8a8a8a;white-space:pre;transform:scaleX(0.9093);transform-origin:0 0;">Filter by name or type</div>
<div class="abs" style="left:44.30px;top:122.74px;font-size:14.24px;line-height:14.24px;font-weight:bold;font-style:normal;color:#333;white-space:pre;transform:scaleX(0.8989);transform-origin:0 0;">Features (24)</div>
<svg class="abs" style="left:145px;top:122px" width="19" height="16"><path d="M1,1.5 L7,1.5 L8.5,3.5 L18,3.5 L18,14.5 L1,14.5 Z" fill="none" stroke="#aaa" stroke-width="1"/><path d="M3,10 L10,10 M6.5,6.5 L6.5,13.5" stroke="#8e9ed8" stroke-width="1.8"/></svg>
<div class="abs" style="left:179px;top:123px;width:4px;height:13px;background:#9a9a9a"></div><div class="abs" style="left:187px;top:123px;width:4px;height:13px;background:#9a9a9a"></div>
<svg class="abs" style="left:206px;top:120px" width="18" height="19"><circle cx="9" cy="11" r="7" fill="none" stroke="#222" stroke-width="1.6"/><path d="M6.5,1.5 L11.5,1.5 M9,1.5 L9,4 M15,4 L16.5,5.5 M9,11 L11,13.5" stroke="#222" stroke-width="1.5"/></svg>
<svg class="abs" style="left:44px;top:153.5px" width="12" height="8"><path d="M1,1 L6,6 L11,1" fill="none" stroke="#555" stroke-width="2" stroke-linecap="round" stroke-linejoin="round"/></svg>
<div class="abs tx" style="left:63.40px;top:150.36px;font-size:13.52px;line-height:13.52px;font-weight:normal;font-style:normal;color:#333;white-space:pre;transform:scaleX(0.9750);transform-origin:0 0;">Default geometry</div>
<div class="abs" style="left:49px;top:170px;width:1px;height:103px;background:#cfcfcf"></div><div class="abs" style="left:45px;top:273px;width:9px;height:1px;background:#cfcfcf"></div>
<svg class="abs" style="left:68.3px;top:178.7px" width="8" height="8"><circle cx="4" cy="4" r="3.3" fill="none" stroke="#777" stroke-width="1"/><circle cx="4" cy="4" r="1.4" fill="#777"/></svg>
<div class="abs tx" style="left:85.20px;top:176.36px;font-size:13.52px;line-height:13.52px;font-weight:normal;font-style:normal;color:#333;white-space:pre;transform:scaleX(0.9750);transform-origin:0 0;">Origin</div>
<svg class="abs" style="left:65px;top:201px" width="16" height="16"><path d="M1,1.5 L9,2.5 L14.5,3.5 L14.5,14.5 L1,13 Z M8.5,2.5 L8.5,8 L14.5,9" fill="#f0f0f0" stroke="#bbb" stroke-width="1.2"/></svg>
<div class="abs tx" style="left:85.20px;top:202.36px;font-size:13.52px;line-height:13.52px;font-weight:normal;font-style:normal;color:#a7a7a7;white-space:pre;transform:scaleX(0.9750);transform-origin:0 0;">Top</div>
<svg class="abs" style="left:65px;top:227px" width="16" height="16"><path d="M1,1.5 L9,2.5 L14.5,3.5 L14.5,14.5 L1,13 Z M8.5,2.5 L8.5,8 L14.5,9" fill="#f0f0f0" stroke="#bbb" stroke-width="1.2"/></svg>
<div class="abs tx" style="left:85.20px;top:228.36px;font-size:13.52px;line-height:13.52px;font-weight:normal;font-style:normal;color:#a7a7a7;white-space:pre;transform:scaleX(0.9750);transform-origin:0 0;">Front</div>
<svg class="abs" style="left:65px;top:253px" width="16" height="16"><path d="M1,1.5 L9,2.5 L14.5,3.5 L14.5,14.5 L1,13 Z M8.5,2.5 L8.5,8 L14.5,9" fill="#f0f0f0" stroke="#bbb" stroke-width="1.2"/></svg>
<div class="abs tx" style="left:85.20px;top:254.36px;font-size:13.52px;line-height:13.52px;font-weight:normal;font-style:normal;color:#a7a7a7;white-space:pre;transform:scaleX(0.9750);transform-origin:0 0;">Right</div>
<svg class="abs" style="left:47px;top:281px" width="8" height="12"><path d="M1.5,1.5 L6,6 L1.5,10.5" fill="none" stroke="#555" stroke-width="2" stroke-linecap="round" stroke-linejoin="round"/></svg>
<svg class="abs" style="left:65px;top:279px" width="16" height="16"><path d="M8,1 L15,4.5 L15,12 L8,15 L1,12 L1,4.5 Z M1,4.5 L8,8 L15,4.5 M8,8 L8,15" fill="#f2f2f2" stroke="#bbb" stroke-width="1.1"/></svg>
<div class="abs tx" style="left:86.30px;top:280.36px;font-size:13.52px;line-height:13.52px;font-weight:normal;font-style:normal;color:#a7a7a7;white-space:pre;transform:scaleX(0.9750);transform-origin:0 0;">Origin Cube</div>
<svg class="abs" style="left:197px;top:276px" width="6" height="20"><path d="M3,0 L3,20" stroke="#222" stroke-width="2" stroke-dasharray="2,2"/><circle cx="3" cy="9.5" r="3" fill="#222"/></svg>
<svg class="abs" style="left:47px;top:307px" width="8" height="12"><path d="M1.5,1.5 L6,6 L1.5,10.5" fill="none" stroke="#555" stroke-width="2" stroke-linecap="round" stroke-linejoin="round"/></svg>
<svg class="abs" style="left:65px;top:306px" width="16" height="14"><path d="M1,1.5 L6,1.5 L7.5,3.5 L15,3.5 L15,12.5 L1,12.5 Z" fill="none" stroke="#555" stroke-width="1.1"/></svg>
<div class="abs tx" style="left:86.30px;top:306.36px;font-size:13.52px;line-height:13.52px;font-weight:normal;font-style:normal;color:#333;white-space:pre;transform:scaleX(0.9750);transform-origin:0 0;">Frame (5)</div>
<svg class="abs" style="left:45px;top:331px" width="16" height="16"><path d="M3,12 L11.5,2.5 L13.5,4.5 L5,13.5 L2.5,14 Z M1,15 L14,15" fill="none" stroke="#b0b0b0" stroke-width="1.1"/></svg>
<div class="abs tx" style="left:66.00px;top:332.36px;font-size:13.52px;line-height:13.52px;font-weight:normal;font-style:normal;color:#a7a7a7;white-space:pre;transform:scaleX(0.9750);transform-origin:0 0;">Gearbox Layout</div>
<div class="abs" style="left:40px;top:353px;width:200px;height:24px;background:linear-gradient(90deg,#eceef1 0%,#eef0f3 85%,#fafafa 100%);border-bottom:1px solid #a9d4ea"></div>
<svg class="abs" style="left:44px;top:361.5px" width="12" height="8"><path d="M1,1 L6,6 L11,1" fill="none" stroke="#555" stroke-width="2" stroke-linecap="round" stroke-linejoin="round"/></svg>
<svg class="abs" style="left:65px;top:358px" width="16" height="14"><path d="M1,1.5 L6,1.5 L7.5,3.5 L15,3.5 L15,12.5 L1,12.5 Z" fill="none" stroke="#555" stroke-width="1.1"/></svg>
<div class="abs tx" style="left:86.20px;top:358.36px;font-size:13.52px;line-height:13.52px;font-weight:normal;font-style:normal;color:#333;white-space:pre;transform:scaleX(0.9750);transform-origin:0 0;">GB Plates (6)</div>
<div class="abs" style="left:49px;top:377px;width:1px;height:183px;background:#cfcfcf"></div><div class="abs" style="left:45px;top:560px;width:9px;height:1px;background:#cfcfcf"></div>
<svg class="abs" style="left:65px;top:383px" width="16" height="16"><path d="M3,12 L11.5,2.5 L13.5,4.5 L5,13.5 L2.5,14 Z M1,15 L14,15" fill="none" stroke="#b0b0b0" stroke-width="1.1"/></svg>
<div class="abs tx" style="left:85.70px;top:384.36px;font-size:13.52px;line-height:13.52px;font-weight:normal;font-style:normal;color:#a7a7a7;white-space:pre;transform:scaleX(0.9750);transform-origin:0 0;">Plate Sketch</div>
<svg class="abs" style="left:65px;top:409px" width="16" height="16"><path d="M1,3 L3,1 L13,1 L15,3 L15,15 L3,15 L1,13 Z" fill="#fff" stroke="#444" stroke-width="1"/><path d="M3,15 L3,3 L15,3" fill="none" stroke="#444" stroke-width="0.8"/><rect x="6" y="6" width="9" height="9" fill="#777" stroke="#444" stroke-width="0.8"/></svg>
<div class="abs tx" style="left:85.70px;top:410.36px;font-size:13.52px;line-height:13.52px;font-weight:normal;font-style:normal;color:#222;white-space:pre;transform:scaleX(0.9750);transform-origin:0 0;">Plate Extrude</div>
<div class="abs" style="left:40px;top:431px;width:200px;height:24px;background:#afd9f1"></div>
<svg class="abs" style="left:65px;top:435px" width="16" height="16"><path d="M3,12 L11.5,2.5 L13.5,4.5 L5,13.5 L2.5,14 Z M1,15 L14,15" fill="none" stroke="#7d8d99" stroke-width="1.1"/></svg>
<div class="abs" style="left:85.70px;top:436.36px;font-size:13.52px;line-height:13.52px;font-weight:bold;font-style:normal;color:#677b89;white-space:pre;transform:scaleX(0.9641);transform-origin:0 0;">Inner plate</div>
<div class="abs" style="left:64px;top:466px;width:171px;height:7px;background:#ababab"></div>
<svg class="abs" style="left:65px;top:487px" width="16" height="16"><path d="M1,3 L3,1 L13,1 L15,3 L15,15 L3,15 L1,13 Z" fill="#fff" stroke="#c4c4c4" stroke-width="1"/><path d="M3,15 L3,3 L15,3" fill="none" stroke="#c4c4c4" stroke-width="0.8"/><rect x="6" y="6" width="9" height="9" fill="#c9c9c9" stroke="#c4c4c4" stroke-width="0.8"/></svg>
<div class="abs tx" style="left:85.70px;top:488.36px;font-size:13.52px;line-height:13.52px;font-weight:normal;font-style:italic;color:#a7a7a7;white-space:pre;transform:scaleX(0.9750);transform-origin:0 0;">Inner Plate</div>
<svg class="abs" style="left:65px;top:513px" width="16" height="16"><path d="M1,15 L1,8 Q1,1 8,1 L15,1 L15,15 Z" fill="#fff" stroke="#bbb" stroke-width="1"/><path d="M3,15 L3,9 Q3,3 9,3 L15,3" fill="none" stroke="#bbb" stroke-width="0.8"/></svg>
<div class="abs tx" style="left:85.70px;top:514.36px;font-size:13.52px;line-height:13.52px;font-weight:normal;font-style:italic;color:#a7a7a7;white-space:pre;transform:scaleX(0.9750);transform-origin:0 0;">Fillet Plate</div>
<svg class="abs" style="left:64px;top:539px" width="17" height="16"><rect x="1" y="5" width="15" height="10" rx="2" fill="#b9b9b9"/><circle cx="5.5" cy="10" r="2.2" fill="#fff"/><circle cx="11.5" cy="10" r="2.2" fill="#fff"/><circle cx="5.5" cy="10" r="1" fill="#999"/><circle cx="11.5" cy="10" r="1" fill="#999"/><path d="M4,1 L4,5 M13,1 L13,5 M7,2 L10,2" stroke="#bbb" stroke-width="1"/></svg>
<div class="abs tx" style="left:85.70px;top:540.36px;font-size:13.52px;line-height:13.52px;font-weight:normal;font-style:italic;color:#a7a7a7;white-space:pre;transform:scaleX(0.9750);transform-origin:0 0;">Gearbox Spacer</div>
<svg class="abs" style="left:197px;top:536px" width="6" height="20"><path d="M3,0 L3,20" stroke="#222" stroke-width="2" stroke-dasharray="2,2"/><circle cx="3" cy="9.5" r="3" fill="#222"/></svg>
<svg class="abs" style="left:45px;top:565px" width="16" height="16"><circle cx="4.5" cy="4.5" r="3.5" fill="none" stroke="#c4c4c4" stroke-width="1"/><circle cx="11" cy="11" r="4" fill="none" stroke="#c4c4c4" stroke-width="1"/><path d="M2,7 L8,14 M7,2 L14,8" stroke="#c4c4c4" stroke-width="1"/></svg>
<div class="abs tx" style="left:66.50px;top:566.36px;font-size:13.52px;line-height:13.52px;font-weight:normal;font-style:italic;color:#a7a7a7;white-space:pre;transform:scaleX(0.9750);transform-origin:0 0;">Main Belt</div>
<svg class="abs" style="left:197px;top:562px" width="6" height="20"><path d="M3,0 L3,20" stroke="#222" stroke-width="2" stroke-dasharray="2,2"/><circle cx="3" cy="9.5" r="3" fill="#222"/></svg>
<svg class="abs" style="left:45px;top:591px" width="17" height="16"><rect x="1" y="5" width="15" height="10" rx="2" fill="#b9b9b9"/><circle cx="5.5" cy="10" r="2.2" fill="#fff"/><circle cx="11.5" cy="10" r="2.2" fill="#fff"/><circle cx="5.5" cy="10" r="1" fill="#999"/><circle cx="11.5" cy="10" r="1" fill="#999"/><path d="M4,1 L4,5 M13,1 L13,5 M7,2 L10,2" stroke="#bbb" stroke-width="1"/></svg>
<div class="abs tx" style="left:66.50px;top:592.36px;font-size:13.52px;line-height:13.52px;font-weight:normal;font-style:italic;color:#a7a7a7;white-space:pre;transform:scaleX(0.9750);transform-origin:0 0;">Inter Shaft</div>
<svg class="abs" style="left:197px;top:588px" width="6" height="20"><path d="M3,0 L3,20" stroke="#222" stroke-width="2" stroke-dasharray="2,2"/><circle cx="3" cy="9.5" r="3" fill="#222"/></svg>
<svg class="abs" style="left:45px;top:617px" width="17" height="16"><rect x="1" y="5" width="15" height="10" rx="2" fill="#b9b9b9"/><circle cx="5.5" cy="10" r="2.2" fill="#fff"/><circle cx="11.5" cy="10" r="2.2" fill="#fff"/><circle cx="5.5" cy="10" r="1" fill="#999"/><circle cx="11.5" cy="10" r="1" fill="#999"/><path d="M4,1 L4,5 M13,1 L13,5 M7,2 L10,2" stroke="#bbb" stroke-width="1"/></svg>
<div class="abs tx" style="left:66.50px;top:618.36px;font-size:13.52px;line-height:13.52px;font-weight:normal;font-style:italic;color:#a7a7a7;white-space:pre;transform:scaleX(0.9750);transform-origin:0 0;">Output Shaft</div>
<svg class="abs" style="left:197px;top:614px" width="6" height="20"><path d="M3,0 L3,20" stroke="#222" stroke-width="2" stroke-dasharray="2,2"/><circle cx="3" cy="9.5" r="3" fill="#222"/></svg>
<svg class="abs" style="left:47px;top:645px" width="8" height="12"><path d="M1.5,1.5 L6,6 L1.5,10.5" fill="none" stroke="#555" stroke-width="2" stroke-linecap="round" stroke-linejoin="round"/></svg>
<svg class="abs" style="left:65px;top:644px" width="16" height="14"><path d="M1,1.5 L6,1.5 L7.5,3.5 L15,3.5 L15,12.5 L1,12.5 Z" fill="none" stroke="#bbb" stroke-width="1.1"/></svg>
<div class="abs tx" style="left:86.50px;top:644.36px;font-size:13.52px;line-height:13.52px;font-weight:normal;font-style:italic;color:#a7a7a7;white-space:pre;transform:scaleX(0.9750);transform-origin:0 0;">Pocketing (4)</div>
<div class="abs" style="left:40px;top:707px;width:200px;height:1px;background:#d8d8d8"></div>
<svg class="abs" style="left:44px;top:717.5px" width="12" height="8"><path d="M1,1 L6,6 L11,1" fill="none" stroke="#555" stroke-width="2" stroke-linecap="round" stroke-linejoin="round"/></svg>
<div class="abs tx" style="left:63.40px;top:714.36px;font-size:13.52px;line-height:13.52px;font-weight:normal;font-style:normal;color:#333;white-space:pre;transform:scaleX(0.9750);transform-origin:0 0;">Parts (6)</div>
<svg class="abs" style="left:65px;top:739px" width="17" height="16"><path d="M1,14.5 L1,9 L3.5,7 L8.5,7 L8.5,3 L11,1 L15.5,1 L15.5,12 L13,14.5 Z M1,9.5 L13,9.5 L13,14.5 M13,9.5 L13,3 L8.5,3 M13,3 L15.5,1" fill="#fff" stroke="#c4c4c4" stroke-width="1.1" stroke-linejoin="round"/></svg>
<div class="abs tx" style="left:85.20px;top:740.36px;font-size:13.52px;line-height:13.52px;font-weight:normal;font-style:normal;color:#a7a7a7;white-space:pre;transform:scaleX(0.9750);transform-origin:0 0;">Origin Cube</div>
<svg class="abs" style="left:65px;top:765px" width="17" height="16"><path d="M1,14.5 L1,9 L3.5,7 L8.5,7 L8.5,3 L11,1 L15.5,1 L15.5,12 L13,14.5 Z M1,9.5 L13,9.5 L13,14.5 M13,9.5 L13,3 L8.5,3 M13,3 L15.5,1" fill="#fff" stroke="#555" stroke-width="1.1" stroke-linejoin="round"/></svg>
<div class="abs tx" style="left:85.20px;top:766.36px;font-size:13.52px;line-height:13.52px;font-weight:normal;font-style:normal;color:#333;white-space:pre;transform:scaleX(0.9750);transform-origin:0 0;">Tube 1&quot;x1&quot;x7&quot;</div>
<svg class="abs" style="left:65px;top:791px" width="17" height="16"><path d="M1,14.5 L1,9 L3.5,7 L8.5,7 L8.5,3 L11,1 L15.5,1 L15.5,12 L13,14.5 Z M1,9.5 L13,9.5 L13,14.5 M13,9.5 L13,3 L8.5,3 M13,3 L15.5,1" fill="#fff" stroke="#555" stroke-width="1.1" stroke-linejoin="round"/></svg>
<div class="abs tx" style="left:85.20px;top:792.36px;font-size:13.52px;line-height:13.52px;font-weight:normal;font-style:normal;color:#333;white-space:pre;transform:scaleX(0.9750);transform-origin:0 0;">Tube 1&quot;x1&quot;x7&quot;</div>
<svg class="abs" style="left:65px;top:817px" width="17" height="16"><path d="M1,14.5 L1,9 L3.5,7 L8.5,7 L8.5,3 L11,1 L15.5,1 L15.5,12 L13,14.5 Z M1,9.5 L13,9.5 L13,14.5 M13,9.5 L13,3 L8.5,3 M13,3 L15.5,1" fill="#fff" stroke="#555" stroke-width="1.1" stroke-linejoin="round"/></svg>
<div class="abs tx" style="left:85.20px;top:818.36px;font-size:13.52px;line-height:13.52px;font-weight:normal;font-style:normal;color:#333;white-space:pre;transform:scaleX(0.9750);transform-origin:0 0;">Tube 1&quot;x1&quot;x8&quot;</div>
<svg class="abs" style="left:65px;top:843px" width="17" height="16"><path d="M1,14.5 L1,9 L3.5,7 L8.5,7 L8.5,3 L11,1 L15.5,1 L15.5,12 L13,14.5 Z M1,9.5 L13,9.5 L13,14.5 M13,9.5 L13,3 L8.5,3 M13,3 L15.5,1" fill="#fff" stroke="#555" stroke-width="1.1" stroke-linejoin="round"/></svg>
<div class="abs tx" style="left:85.20px;top:844.36px;font-size:13.52px;line-height:13.52px;font-weight:normal;font-style:normal;color:#333;white-space:pre;transform:scaleX(0.9750);transform-origin:0 0;">Part 5</div>
<svg class="abs" style="left:65px;top:869px" width="17" height="16"><path d="M1,14.5 L1,9 L3.5,7 L8.5,7 L8.5,3 L11,1 L15.5,1 L15.5,12 L13,14.5 Z M1,9.5 L13,9.5 L13,14.5 M13,9.5 L13,3 L8.5,3 M13,3 L15.5,1" fill="#fff" stroke="#555" stroke-width="1.1" stroke-linejoin="round"/></svg>
<div class="abs tx" style="left:85.20px;top:870.36px;font-size:13.52px;line-height:13.52px;font-weight:normal;font-style:normal;color:#333;white-space:pre;transform:scaleX(0.9750);transform-origin:0 0;">Motor Plate</div>
<div class="abs" style="left:245px;top:538px;width:33px;height:34px;background:#fff;border:1px solid #a0a0a0;border-left:none"></div>
<svg class="abs" style="left:250px;top:545px" width="22" height="22"><path d="M2.5,2.5 L5,5 L7.5,2.5" fill="none" stroke="#333" stroke-width="1.3" stroke-linecap="round"/><path d="M5,7 L5,19" stroke="#888" stroke-width="1.8"/><path d="M10,3.5 L20,3.5 M7.5,8.5 L20,8.5 M7.5,13.5 L20,13.5 M7.5,18.5 L20,18.5" stroke="#222" stroke-width="1.1" stroke-linecap="round"/></svg>
<div class="abs" style="left:321.75px;top:78.75px;width:220px;height:220px;background:#fff;box-shadow:0 4px 9px rgba(0,0,0,0.2), 0 0 2px rgba(0,0,0,0.08)"></div>
<div class="abs" style="left:321.75px;top:106.5px;width:220px;height:1px;background:#ddd"></div>
<div class="abs" style="left:328.25px;top:86.00px;font-size:14.17px;line-height:14.17px;font-weight:bold;font-style:normal;color:#333;white-space:pre;transform:scaleX(0.8791);transform-origin:0 0;">Inner plate</div>
<div class="abs" style="left:485.75px;top:79px;width:28px;height:27.75px;background:#039a08"></div>
<svg class="abs" style="left:489px;top:85px" width="21" height="16" viewBox="0 0 21 16"><path d="M3.2,7.8 L9.6,14 L18.5,4" fill="none" stroke="#fff" stroke-width="2.8" stroke-linecap="round"/></svg>
<svg class="abs" style="left:521.5px;top:87px" width="14" height="14" viewBox="0 0 14 14"><path d="M2,2 L12,12 M12,2 L2,12" stroke="#c3283a" stroke-width="2.8" stroke-linecap="round"/></svg>
<div class="abs" style="left:325.25px;top:113px;width:187.25px;height:43.5px;border:1px solid #dcdcdc;border-radius:2px"></div>
<div class="abs tx" style="left:331.25px;top:119.08px;font-size:10.54px;line-height:10.54px;font-weight:normal;font-style:normal;color:#555;white-space:pre;transform:scaleX(0.9519);transform-origin:0 0;">Sketch plane</div>
<div class="abs tx" style="left:332.50px;top:138.31px;font-size:13.81px;line-height:13.81px;font-weight:normal;font-style:normal;color:#444;white-space:pre;transform:scaleX(0.9228);transform-origin:0 0;">Face of Tubes</div>
<svg class="abs" style="left:492px;top:141px" width="10" height="10" viewBox="0 0 10 10"><path d="M1,1 L9,9 M9,1 L1,9" stroke="#555" stroke-width="1.3"/></svg>
<svg class="abs" style="left:516px;top:115px" width="20" height="20" viewBox="0 0 20 20"><circle cx="10" cy="10.5" r="8.7" fill="none" stroke="#444" stroke-width="1.3"/><circle cx="10" cy="10.5" r="6.6" fill="none" stroke="#444" stroke-width="1.3"/><path d="M10,4.5 L10,10.5 L16,10.5" fill="none" stroke="#444" stroke-width="1.3"/></svg>
<div class="abs" style="left:326.2px;top:170px;width:11.8px;height:11.8px;background:#1d5bbf;border-radius:2px"></div>
<svg class="abs" style="left:326.6px;top:170.4px" width="11" height="11" viewBox="0 0 11 11"><path d="M2,5.5 L4.5,8 L9,2.5" fill="none" stroke="#fff" stroke-width="1.8"/></svg>
<div class="abs tx" style="left:342.50px;top:168.90px;font-size:14.53px;line-height:14.53px;font-weight:normal;font-style:normal;color:#555;white-space:pre;transform:scaleX(0.9154);transform-origin:0 0;">Disable imprinting</div>
<div class="abs" style="left:326.2px;top:197.5px;width:11.8px;height:11.8px;border:1px solid #666;border-radius:2px;background:#fff"></div>
<div class="abs tx" style="left:342.50px;top:196.40px;font-size:14.53px;line-height:14.53px;font-weight:normal;font-style:normal;color:#555;white-space:pre;transform:scaleX(0.9080);transform-origin:0 0;">Show constraints</div>
<div class="abs" style="left:326.2px;top:225px;width:11.8px;height:11.8px;border:1px solid #666;border-radius:2px;background:#fff"></div>
<div class="abs tx" style="left:342.50px;top:223.90px;font-size:14.53px;line-height:14.53px;font-weight:normal;font-style:normal;color:#555;white-space:pre;transform:scaleX(0.8880);transform-origin:0 0;">Show expressions</div>
<div class="abs" style="left:326.2px;top:252px;width:11.8px;height:11.8px;background:#1d5bbf;border-radius:2px"></div>
<svg class="abs" style="left:326.6px;top:252.4px" width="11" height="11" viewBox="0 0 11 11"><path d="M2,5.5 L4.5,8 L9,2.5" fill="none" stroke="#fff" stroke-width="1.8"/></svg>
<div class="abs tx" style="left:342.50px;top:250.90px;font-size:14.53px;line-height:14.53px;font-weight:normal;font-style:normal;color:#555;white-space:pre;transform:scaleX(0.8966);transform-origin:0 0;">Show errors</div>
<div class="abs" style="left:494.25px;top:274.25px;width:21.25px;height:21px;border:1px solid #aaa;border-radius:3px;background:#fff"></div>
<svg class="abs" style="left:496px;top:276px" width="18" height="18" viewBox="0 0 18 18"><circle cx="8.8" cy="8.8" r="7.2" fill="none" stroke="#333" stroke-width="1.2"/><path d="M5,12.5 L11.5,4 L13.5,5.8 L7.5,13 L5,13.5 Z" fill="none" stroke="#333" stroke-width="1.1"/><path d="M4,12.8 L13.5,12.8" stroke="#2f5fb3" stroke-width="1.1"/><path d="M13.5,13.5 L16.5,16.5" stroke="#333" stroke-width="1.8"/></svg>
<svg class="abs" style="left:524px;top:281px" width="13" height="13" viewBox="0 0 13 13"><circle cx="6.5" cy="6.5" r="6" fill="#a8a8a8"/><path d="M4.5,5 Q4.5,3 6.5,3 Q8.5,3 8.5,4.8 Q8.5,6 7,6.6 L6.5,7.5 L6.5,8" fill="none" stroke="#fff" stroke-width="1.5"/><circle cx="6.5" cy="10" r="0.9" fill="#fff"/></svg>
<div class="abs" style="left:39px;top:1050px;width:1880px;height:29px;background:#d6d6d6"></div>
<svg class="abs" style="left:48px;top:1056px" width="16" height="16" viewBox="0 0 16 16"><path d="M8,1 L8,15 M1,8 L15,8" stroke="#444" stroke-width="2.2"/></svg>
<svg class="abs" style="left:73px;top:1050px" width="160" height="29" viewBox="0 0 160 29"><path d="M0,0 L35,0 L43,14.5 L35,29 L0,29 Z" fill="#e4e4e4"/><path d="M36,0 L151,0 L159,14.5 L151,29 L36,29 L44,14.5 Z" fill="#f7f7f7"/><path d="M35,0 L43,14.5 L35,29" fill="none" stroke="#d0d0d0" stroke-width="1"/></svg>
<svg class="abs" style="left:82px;top:1055px" width="19" height="17" viewBox="0 0 19 17"><path d="M9.5,1 L18.5,9 L16,9 L16,16.5 L11.5,16.5 L11.5,11.5 L7.5,11.5 L7.5,16.5 L3,16.5 L3,9 L0.5,9 Z" fill="#555"/><rect x="13" y="2" width="2.5" height="5" fill="#555"/></svg>
<svg class="abs" style="left:125px;top:1055px" width="19" height="16" viewBox="0 0 19 16"><path d="M1,1.5 L7,1.5 L8.5,3.5 L18,3.5 L18,15 L1,15 Z" fill="none" stroke="#333" stroke-width="1.1"/></svg>
<div class="abs tx" style="left:150.50px;top:1056.44px;font-size:14.24px;line-height:14.24px;font-weight:normal;font-style:normal;color:#555;white-space:pre;transform:scaleX(0.9474);transform-origin:0 0;">Exercise 3</div>
<div class="abs" style="left:236px;top:1050px;width:201px;height:29px;background:#e5e5e5"></div>
<svg class="abs" style="left:236px;top:1050px" width="10" height="29" viewBox="0 0 10 29"><path d="M0,0 L8,14.5 L0,29" fill="#f7f7f7"/></svg>
<svg class="abs" style="left:248px;top:1056px" width="14" height="14" viewBox="0 0 14 14"><circle cx="7" cy="7" r="6.5" fill="#6b9bd8"/><circle cx="7" cy="7" r="2.5" fill="#fff"/><path d="M7,0.5 L7,3 M7,11 L7,13.5" stroke="#fff" stroke-width="1.2"/></svg>
<svg class="abs" style="left:266px;top:1054px" width="17" height="18" viewBox="0 0 17 18"><path d="M1,3 L4,0.8 L16,0.8 L16,14 L13,17 L1,17 Z M1,3 L13,3 L13,17 M13,3 L16,0.8" fill="#888" stroke="#333" stroke-width="1"/><rect x="3" y="5" width="8" height="9" fill="#9a9a9a" stroke="#444" stroke-width="0.6"/><path d="M1,3 L1,17 L13,17" fill="none" stroke="#333" stroke-width="1"/><path d="M1.5,3.5 L1.5,16.5 L12.5,16.5 L12.5,3.5 Z" fill="none" stroke="#fff" stroke-width="0.8"/></svg>
<div class="abs tx" style="left:289.00px;top:1056.94px;font-size:14.24px;line-height:14.24px;font-weight:normal;font-style:normal;color:#666;white-space:pre;transform:scaleX(0.9740);transform-origin:0 0;">Exercise 3 Assembly</div>
<div class="abs" style="left:438px;top:1050px;width:200px;height:29px;background:#fff"></div><div class="abs" style="left:438px;top:1075.5px;width:199px;height:2.2px;background:#123f91"></div>
<svg class="abs" style="left:450px;top:1054px" width="17" height="19" viewBox="0 0 17 19"><path d="M1,5 L4,3 L7,5 L7,18 L1,18 Z M4,3 L4,18 M7,6 L10,1 L15.5,1 L15.5,18 L7,18 M10,1 L10,18" fill="none" stroke="#333" stroke-width="1"/></svg>
<div class="abs tx" style="left:471.50px;top:1056.94px;font-size:14.24px;line-height:14.24px;font-weight:normal;font-style:normal;color:#333;white-space:pre;transform:scaleX(0.9579);transform-origin:0 0;">Exercise 3 Part Studio</div>
<svg class="abs" style="left:1750px;top:85px" width="160" height="165" viewBox="0 0 160 165">
<path d="M80,6 L87.8,15.8 L72.6,15.8 Z" fill="#999"/>
<path d="M59,16.5 Q44,22 33,32" fill="none" stroke="#999" stroke-width="4.5"/>
<path d="M26.9,38.5 L26,27 L37.5,33 Z" fill="#999"/>
<path d="M101,16.5 Q116,22 127,32" fill="none" stroke="#999" stroke-width="4.5"/>
<path d="M133.1,38.5 L134,27 L122.5,33 Z" fill="#999"/>
<path d="M5,80.8 L15.2,72 L15.2,89.6 Z" fill="#999"/>
<path d="M155,80.8 L144.8,72 L144.8,89.6 Z" fill="#999"/>
<path d="M80,155.9 L87.8,146.2 L72.6,146.2 Z" fill="#999"/>
<rect x="51.5" y="52.5" width="56.5" height="55.5" fill="#e4e6ea"/>
<circle cx="51.5" cy="52.5" r="10.8" fill="#fff"/><circle cx="108" cy="52.5" r="10.8" fill="#fff"/><circle cx="51.5" cy="108" r="10.8" fill="#fff"/><circle cx="108" cy="108" r="10.8" fill="#fff"/>
<rect x="58" y="59" width="44" height="44" rx="11" fill="#fff"/>
<path d="M110.6,52.2 L110.6,111.1 L51.2,111.1" fill="none" stroke="#2a2acc" stroke-width="1.3"/>
<path d="M51.2,111.1 L110.6,111.1" stroke="#33aa33" stroke-width="1.3"/>
</svg>
<div class="abs tx" style="left:1856.50px;top:120.56px;font-size:13.52px;line-height:13.52px;font-weight:normal;font-style:normal;color:#5a5ad0;white-space:pre;transform:scaleX(1.0293);transform-origin:0 0;">Z</div>
<div class="abs tx" style="left:1786.00px;top:189.56px;font-size:13.52px;line-height:13.52px;font-weight:normal;font-style:normal;color:#33aa33;white-space:pre;">Y</div>
<div class="abs tx" style="left:1819.60px;top:157.50px;font-size:14.53px;line-height:14.53px;font-weight:normal;font-style:normal;color:#222;white-space:pre;transform:scaleX(0.8868);transform-origin:0 0;">Left</div>
<svg class="abs" style="left:1865px;top:222px" width="20" height="20" viewBox="0 0 20 20"><path d="M10,1 L18.5,4 L18.5,15 L10,19 L1.5,15 L1.5,4 Z" fill="#e2e2e2" stroke="#333" stroke-width="1.1"/><path d="M1.5,4 L10,7.5 L18.5,4 M10,7.5 L10,19" fill="none" stroke="#333" stroke-width="1"/><path d="M10,7.5 L18.5,4 L18.5,15 L10,19 Z" fill="#f8f8f8"/><path d="M1.5,4 L10,7.5 L18.5,4 M10,7.5 L10,19 M10,1 L18.5,4 L18.5,15 L10,19 L1.5,15 L1.5,4 Z" fill="none" stroke="#333" stroke-width="1.1"/></svg>
<svg class="abs" style="left:1892px;top:230px" width="8" height="5" viewBox="0 0 8 5"><path d="M0.5,0.5 L7.5,0.5 L4,4.5 Z" fill="#333"/></svg>
<div class="abs" style="left:1888px;top:433px;width:32px;height:133px;border:1px solid #cfcfcf;border-right:none;background:#fff"></div>
<div class="abs" style="left:1888px;top:466px;width:31px;height:1px;background:#cfcfcf"></div>
<div class="abs" style="left:1888px;top:499.5px;width:31px;height:1px;background:#cfcfcf"></div>
<div class="abs" style="left:1888px;top:532.5px;width:31px;height:1px;background:#cfcfcf"></div>
<div class="abs" style="left:1888px;top:576.5px;width:32px;height:100px;border:1px solid #cfcfcf;border-right:none;background:#fff"></div>
<div class="abs" style="left:1888px;top:609.5px;width:31px;height:1px;background:#cfcfcf"></div>
<div class="abs" style="left:1888px;top:642.5px;width:31px;height:1px;background:#cfcfcf"></div>
<svg class="abs" style="left:1894px;top:440px" width="22" height="22" viewBox="0 0 22 22"><path d="M3,14 L11,2 L15,4.5 L8,14 Z" fill="#8a8a8a"/><path d="M6,14 L15,4 L19,7.5 L11,14 Z" fill="#a8a8a8"/><path d="M9,14 L17,8 L20,11 L14,14 Z" fill="#c4c4c4"/><rect x="1" y="13.5" width="20" height="7" rx="1" fill="#eee" stroke="#777" stroke-width="0.9"/><rect x="14" y="14" width="6.5" height="6" fill="#ccc"/><circle cx="5" cy="17" r="1.6" fill="none" stroke="#555" stroke-width="0.9"/></svg>
<svg class="abs" style="left:1894px;top:473px" width="22" height="22" viewBox="0 0 22 22"><path d="M7,10 L13,6.5 L20,9.5 L20,17.5 L13.5,21 L7,17.5 Z M7,10 L13.5,13 L20,9.5 M13.5,13 L13.5,21" fill="#fff" stroke="#333" stroke-width="1.1" stroke-linejoin="round"/><rect x="0.8" y="0.8" width="10.5" height="8.2" fill="#1d5bbf"/><path d="M4.3,0.8 L4.3,9 M7.8,0.8 L7.8,9 M0.8,3.5 L11.3,3.5 M0.8,6.2 L11.3,6.2" stroke="#9cc0f0" stroke-width="0.7"/></svg>
<svg class="abs" style="left:1894px;top:506px" width="22" height="22" viewBox="0 0 22 22"><rect x="0.8" y="0.8" width="10.5" height="8.2" fill="#444"/><path d="M4.3,0.8 L4.3,9 M7.8,0.8 L7.8,9 M0.8,3.5 L11.3,3.5 M0.8,6.2 L11.3,6.2" stroke="#ddd" stroke-width="0.7"/><path d="M7,10 L12,8 L17,10 L17,15.5 L12,18 L7,15.5 Z M7,10 L12,12 L17,10 M12,12 L12,18" fill="#fff" stroke="#333" stroke-width="1" stroke-linejoin="round"/><path d="M4.5,9 Q2.5,9 2.5,12 L2.5,14 Q2.5,15.5 1,15.5 Q2.5,15.5 2.5,17 L2.5,19 Q2.5,21 4.5,21 M17.5,4 Q19.5,4 19.5,7 L19.5,11 Q19.5,12.5 21,12.5 Q19.5,12.5 19.5,14 L19.5,18 Q19.5,20 17.5,20" fill="none" stroke="#333" stroke-width="1.1"/></svg>
<svg class="abs" style="left:1894px;top:539px" width="22" height="22" viewBox="0 0 22 22"><rect x="0.8" y="0.8" width="10.5" height="8.2" fill="#444"/><path d="M4.3,0.8 L4.3,9 M7.8,0.8 L7.8,9 M0.8,3.5 L11.3,3.5 M0.8,6.2 L11.3,6.2" stroke="#ddd" stroke-width="0.7"/><path d="M3,9 Q0.8,14 3,20" fill="none" stroke="#222" stroke-width="1.8"/><path d="M18.5,7 Q21,13 18.5,19" fill="none" stroke="#222" stroke-width="1.8"/><path d="M5.5,17.5 Q8.5,18 10,13 Q11.5,8.5 15,9" fill="none" stroke="#222" stroke-width="2.4"/><path d="M7.5,12 L14.5,12" stroke="#222" stroke-width="1.6"/></svg>
<svg class="abs" style="left:1893px;top:581px" width="24" height="24" viewBox="0 0 24 24"><rect x="0.5" y="0.5" width="23" height="23" rx="3" fill="#d9d9d9"/><path d="M3,9 L19,5.5 L21.5,16 L5.5,19.5 Z" fill="#222"/><circle cx="8.5" cy="12.5" r="3" fill="#6aa8e0" stroke="#eee" stroke-width="0.8"/><circle cx="15.5" cy="11" r="3" fill="#6aa8e0" stroke="#eee" stroke-width="0.8"/><path d="M10,17 Q13,18 15,15.5" fill="none" stroke="#fff" stroke-width="1"/><path d="M5,3 L9,3 M13,3 L17,3 M11,2 L11,6" stroke="#4a78c0" stroke-width="1.2"/></svg>
<svg class="abs" style="left:1894px;top:615px" width="22" height="22" viewBox="0 0 22 22"><rect x="0.5" y="0.5" width="21" height="21" rx="1" fill="#4caf50" stroke="#cfe8cf" stroke-width="1"/><path d="M3.5,5 Q7,4 10.5,5.5 L10.5,17.5 Q7,16.5 3.5,17 Z M11.5,5.5 Q15,4 18.5,5 L18.5,17 Q15,16.5 11.5,17.5 Z" fill="#fff"/></svg>
<svg class="abs" style="left:1894px;top:648px" width="22" height="22" viewBox="0 0 22 22"><rect x="0.5" y="0.5" width="21" height="21" fill="#1a5fd6" stroke="#111" stroke-width="1.2"/><path d="M3.5,5 Q7,4 10.5,5.5 L10.5,17.5 Q7,16.5 3.5,17 Z M11.5,5.5 Q15,4 18.5,5 L18.5,17 Q15,16.5 11.5,17.5 Z" fill="#fff"/></svg>
<svg class="abs" style="left:1821px;top:1029px" width="18" height="14" viewBox="0 0 18 14"><ellipse cx="11" cy="4.5" rx="5.5" ry="4" fill="#fff" stroke="#222" stroke-width="1.3"/><ellipse cx="11" cy="4.5" rx="2" ry="1.3" fill="none" stroke="#222" stroke-width="1"/><path d="M1,7.5 L11,7.5 L16.5,6 L16.5,10 Q16,12 13,12 L1,12 Z" fill="#fff" stroke="#222" stroke-width="1.3"/><path d="M3,12 L3,10.5 M6,12 L6,10.5 M9,12 L9,10.5 M12,12 L12,10.5" stroke="#222" stroke-width="0.8"/></svg>
<svg class="abs" style="left:1854px;top:1029px" width="22" height="15" viewBox="0 0 22 15"><path d="M1.5,13.5 Q1.5,1.5 11,1.5 Q20.5,1.5 20.5,13.5 Z" fill="#fff" stroke="#222" stroke-width="1.5"/><path d="M5.5,11 Q6,5 11,5 Q16,5 16.5,11 L14,11 Q13,8 11,8 Q9,8 8,11 Z" fill="#fff" stroke="#222" stroke-width="1.2"/></svg>
<svg class="abs" style="left:1892px;top:1028px" width="16" height="16" viewBox="0 0 16 16"><path d="M1,1 L15,1 M8,1 L8,13 M2,1 L0.5,8 M14,1 L15.5,8 M2,1 L4,8 M14,1 L12,8" fill="none" stroke="#222" stroke-width="1.2"/><rect x="0.5" y="7.5" width="4" height="1.5" fill="#222"/><rect x="11.5" y="7.5" width="4" height="1.5" fill="#222"/><rect x="0.5" y="13" width="15" height="2.2" fill="#222"/></svg>
</body></html>
